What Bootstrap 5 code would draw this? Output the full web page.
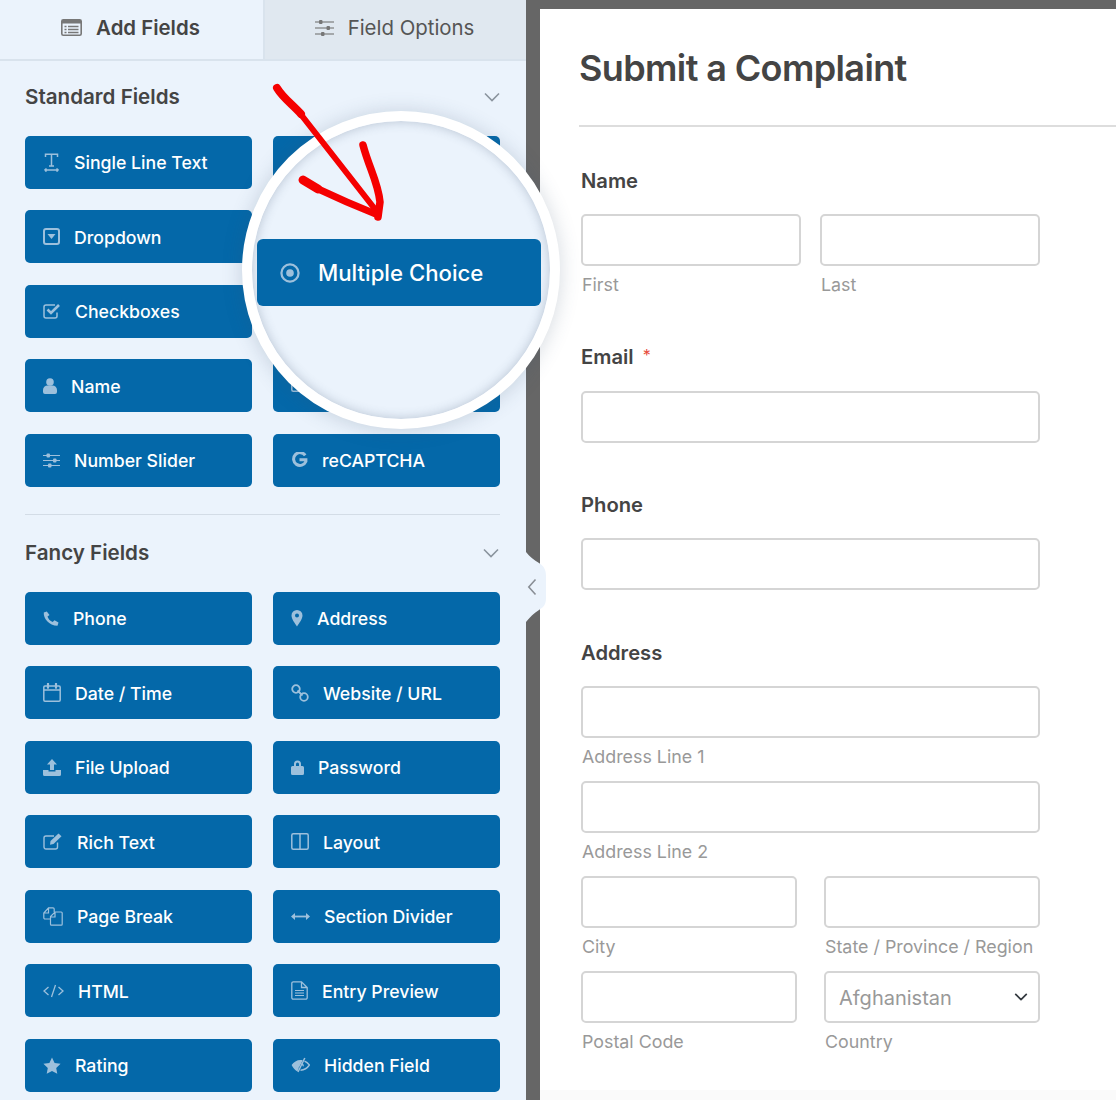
<!DOCTYPE html>
<html lang="en"><head><meta charset="utf-8"><title>Submit a Complaint</title>
<link href="https://cdn.jsdelivr.net/npm/bootstrap@5.3.0/dist/css/bootstrap.min.css" rel="stylesheet">
<style>
html,body{height:1100px;overflow:hidden;margin:0}
body{font-family:Inter,"Liberation Sans",sans-serif;background:#666;color:#444}
.stage{height:1100px;overflow:hidden}
.sidebar{width:526px;flex:none;height:1100px;background:#ebf3fc}
.tabbar{height:61px;border-bottom:2px solid #d9e3ed}
.tabitem{width:263px;font-size:20.4px;gap:14px;line-height:24px;padding:0 2px 4px 0}
.tabitem svg{color:#777}
.tab-on{font-weight:600;color:#444}
.tab-off{background:#e0e8f0;color:#555;border-left:2px solid #d9e3ed}
.fieldset-box{padding:24px 25px 0}
.fieldset-next{padding-top:26px;border-top:1px solid #d3dce6;margin:27px 26px 0 25px}
.group-head{font-size:20.6px;font-weight:600;line-height:24px;color:#444;margin:0 0 26.9px}
.group-head svg{color:#8a949e;margin-right:1px}
.btn-grid{display:grid;grid-template-columns:227px 227px;column-gap:21px;row-gap:21.5px}
.btn.fld-btn{height:53px;padding:2px 0 0 18px;gap:14px;background:#0468a9;border:0;border-radius:5px;color:#fff;font-size:17.7px;font-weight:500;line-height:22px;text-align:left}
.fld-btn svg{color:#9dc0dc;flex:none;margin-top:-2px}
.work{flex:1;padding:9px 0 0 14px;min-width:0}
.canvas{background:#fff;height:1091px;padding:0 0 0 39px;border-bottom:10px solid #fafafa}
.form-title{font-size:36px;font-weight:600;line-height:44px;color:#444;margin:0;padding-top:37px;letter-spacing:-.62px}
.form-rule{height:2px;background:#ddd;margin:35px 0 42px}
.form-body{width:459px;margin-left:2px}
.fld-label{display:block;font-size:20.2px;font-weight:600;line-height:24px;color:#444;margin:0 0 21px}
.fld-label-email{margin-bottom:22px}
.fld-req{color:#e74c3c;font-weight:400;font-size:16px;margin-left:4px;vertical-align:3px}
.fld-sec{margin-bottom:50px}
.fld-sec-name{margin-bottom:47px}
.fld-sec-phone{margin-bottom:51px}
.form-control.fld-in,.form-select.fld-in{height:52px;border:2px solid #d5d5d5;border-radius:5px;box-shadow:none}
.form-select.fld-in{font-size:20px;color:#999;padding:2px 0 0 13px;background-size:18px 14px;background-position:right 8px center}
.fld-sub{font-size:17.85px;line-height:22px;color:#999;margin:8px 0 0 1px}
.pair-a{display:grid;grid-template-columns:220px 220px;column-gap:19px}
.pair-b{display:grid;grid-template-columns:216px 216px;column-gap:27px}
.addr-rows{display:grid;row-gap:13px}
.side-tab{position:absolute;left:526px;top:552px}
.side-tab svg{display:block}
.lens{position:absolute;left:242px;top:111px;width:318px;height:318px;border-radius:50%;background:#ebf3fc;border:10px solid #fff;box-shadow:0 1px 20px rgba(60,80,110,.22),inset 0 0 11px rgba(60,80,110,.3)}
.lens-btn{width:284px;height:67px;background:#0468a9;color:#fff;border-radius:6px;font-size:22.2px;font-weight:500;padding-left:23px;gap:18px;flex:none;margin:5px 0 0 5px}
.lens-btn span{padding-top:1px}
.lens-btn svg{color:#9dc0dc;flex:none}
.arrow{position:absolute;left:260px;top:70px}
</style></head><body>
<div class="stage d-flex position-relative">
<aside class="sidebar">
  <div class="tabbar d-flex">
    <div class="tabitem tab-on d-flex align-items-center justify-content-center">
      <svg width="21" height="17" viewBox="0 0 21 17"><rect x=".8" y=".8" width="19.400" height="15.400" rx="1.500" fill="none" stroke="currentColor" stroke-width="1.600"/><rect x="1" y="1" width="19" height="3.500" fill="currentColor"/><path d="M3.500 7.500h2M3.500 10.500h2M3.500 13.500h2M7 7.500h10.500M7 10.500h10.500M7 13.500h10.500" stroke="currentColor" stroke-width="1.300"/></svg>
      <span>Add Fields</span></div>
    <div class="tabitem tab-off d-flex align-items-center justify-content-center">
      <svg width="19" height="18" viewBox="0 0 19 18"><path d="M0 3h19M0 9h19M0 15h19" stroke="currentColor" stroke-width="1.600" opacity=".75"/><rect x="4" y="1" width="3.500" height="4" rx="1" fill="currentColor"/><rect x="11.500" y="7" width="3.500" height="4" rx="1" fill="currentColor"/><rect x="6" y="13" width="3.500" height="4" rx="1" fill="currentColor"/></svg>
      <span>Field Options</span></div>
  </div>

  <section class="fieldset-box">
    <div class="group-head d-flex justify-content-between align-items-center"><span>Standard Fields</span><svg width="16" height="10" viewBox="0 0 16 10"><path d="M1 1.500l7 7 7-7" fill="none" stroke="currentColor" stroke-width="1.600"/></svg></div>
    <div class="btn-grid">
      <button class="btn fld-btn d-flex align-items-center"><svg width="17" height="20" viewBox="0 0 17 20"><path d="M2.500 5V2.200h12V5M8.500 2.200V14M6 14h5M1.500 18h14M1.500 18l2-1.500M1.500 18l2 1.500M15.500 18l-2-1.500M15.500 18l-2 1.500" fill="none" stroke="currentColor" stroke-width="1.500"/></svg><span>Single Line Text</span></button>
      <button class="btn fld-btn d-flex align-items-center" aria-label="Paragraph Text"></button>
      <button class="btn fld-btn d-flex align-items-center"><svg width="17" height="17" viewBox="0 0 17 17"><rect x="1" y="1" width="15" height="15" rx="2" fill="none" stroke="currentColor" stroke-width="2"/><path d="M4.500 6h8l-4 5z" fill="currentColor"/></svg><span>Dropdown</span></button>
      <button class="btn fld-btn d-flex align-items-center" aria-label="Multiple Choice"></button>
      <button class="btn fld-btn d-flex align-items-center"><svg width="18" height="16" viewBox="0 0 18 16"><path d="M14 9.500V13a2 2 0 0 1-2 2H3a2 2 0 0 1-2-2V4a2 2 0 0 1 2-2h9" fill="none" stroke="currentColor" stroke-width="1.500"/><path d="M4.500 6.500l3.500 3.500L16 2" fill="none" stroke="currentColor" stroke-width="2.600"/></svg><span>Checkboxes</span></button>
      <button class="btn fld-btn d-flex align-items-center" aria-label="Numbers"></button>
      <button class="btn fld-btn d-flex align-items-center"><svg width="14" height="16" viewBox="0 0 14 16"><circle cx="7" cy="4" r="3.800" fill="currentColor"/><path d="M0 14v-2a4.500 4.500 0 0 1 4.500-4.500h5A4.500 4.500 0 0 1 14 12v2a2 2 0 0 1-2 2H2a2 2 0 0 1-2-2z" fill="currentColor"/></svg><span>Name</span></button>
      <button class="btn fld-btn d-flex align-items-center" aria-label="Email"><svg width="16" height="12" viewBox="0 0 16 12"><rect x=".8" y=".8" width="14.400" height="10.400" rx="1.500" fill="none" stroke="currentColor" stroke-width="1.500"/></svg></button>
      <button class="btn fld-btn d-flex align-items-center"><svg width="17" height="15" viewBox="0 0 17 15"><path d="M0 2.500h17M0 7.500h17M0 12.500h17" stroke="currentColor" stroke-width="1.200"/><rect x="3.500" y=".5" width="3.500" height="4" rx="1" fill="currentColor"/><rect x="10" y="5.500" width="3.500" height="4" rx="1" fill="currentColor"/><rect x="5" y="10.500" width="3.500" height="4" rx="1" fill="currentColor"/></svg><span>Number Slider</span></button>
      <button class="btn fld-btn d-flex align-items-center"><svg width="17" height="16" viewBox="0 0 17 16"><path d="M14.200 3.300A6.400 6.400 0 1 0 14.900 9.500V7.800H8.500" fill="none" stroke="currentColor" stroke-width="3"/></svg><span>reCAPTCHA</span></button>
    </div>
  </section>

  <section class="fieldset-next">
    <div class="group-head d-flex justify-content-between align-items-center"><span>Fancy Fields</span><svg width="16" height="10" viewBox="0 0 16 10"><path d="M1 1.500l7 7 7-7" fill="none" stroke="currentColor" stroke-width="1.600"/></svg></div>
    <div class="btn-grid">
      <button class="btn fld-btn d-flex align-items-center"><svg width="16" height="15" viewBox="0 0 16 15"><path d="M3.800 .5L.8 1.500C.2 7.500 6 14.500 14.500 14.800l1-3.300-4-2.200-1.800 1.700C7 10 5 7.500 4.500 5.500l2-1.500z" fill="currentColor"/></svg><span>Phone</span></button>
      <button class="btn fld-btn d-flex align-items-center"><svg width="12" height="17" viewBox="0 0 12 17"><path fill-rule="evenodd" d="M6 0a5.500 5.500 0 0 1 5.500 5.500C11.500 9 8 13.500 6 16.500 4 13.500.5 9 .5 5.500A5.500 5.500 0 0 1 6 0zm0 3.500a2 2 0 1 0 0 4 2 2 0 0 0 0-4z" fill="currentColor"/></svg><span>Address</span></button>
      <button class="btn fld-btn d-flex align-items-center"><svg width="18" height="19" viewBox="0 0 18 19"><rect x=".8" y="3" width="16.400" height="15.200" rx="1.200" fill="none" stroke="currentColor" stroke-width="1.500"/><path d="M1 7h16" stroke="currentColor" stroke-width="1.500"/><path d="M5 .8v4M13 .8v4" stroke="currentColor" stroke-width="2.200" stroke-linecap="round"/></svg><span>Date / Time</span></button>
      <button class="btn fld-btn d-flex align-items-center"><svg width="18" height="18" viewBox="0 0 18 18"><circle cx="5" cy="5" r="3.800" fill="none" stroke="currentColor" stroke-width="1.800"/><circle cx="13" cy="13" r="3.800" fill="none" stroke="currentColor" stroke-width="1.800"/><path d="M6.500 6.500l5 5" stroke="currentColor" stroke-width="1.800"/></svg><span>Website / URL</span></button>
      <button class="btn fld-btn d-flex align-items-center"><svg width="18" height="17" viewBox="0 0 18 17"><path d="M9 0l5 5.500h-3V11H7V5.500H4z" fill="currentColor"/><path d="M0 11h5.500v1.500h7V11H18v4.500a1.500 1.500 0 0 1-1.500 1.500h-15A1.500 1.500 0 0 1 0 15.500z" fill="currentColor"/></svg><span>File Upload</span></button>
      <button class="btn fld-btn d-flex align-items-center"><svg width="13" height="15" viewBox="0 0 13 15"><path fill-rule="evenodd" d="M3 6V4a3.500 3.500 0 0 1 7 0v2h1.500A1.500 1.500 0 0 1 13 7.500V13.500a1.500 1.500 0 0 1-1.500 1.500h-10A1.500 1.500 0 0 1 0 13.500V7.500A1.500 1.500 0 0 1 1.500 6zm2 0h3V4a1.500 1.500 0 0 0-3 0z" fill="currentColor"/></svg><span>Password</span></button>
      <button class="btn fld-btn d-flex align-items-center"><svg width="20" height="17" viewBox="0 0 20 17"><path d="M14.500 9.500V14a2 2 0 0 1-2 2H3a2 2 0 0 1-2-2V5a2 2 0 0 1 2-2h8" fill="none" stroke="currentColor" stroke-width="1.400"/><path d="M7.500 8l8-7.500 3 2.800-8 7.700-3.500.8z" fill="currentColor"/></svg><span>Rich Text</span></button>
      <button class="btn fld-btn d-flex align-items-center"><svg width="18" height="17" viewBox="0 0 18 17"><rect x=".8" y=".8" width="16.400" height="15.400" rx="1.500" fill="none" stroke="currentColor" stroke-width="1.500"/><path d="M9 1v15" stroke="currentColor" stroke-width="1.500"/></svg><span>Layout</span></button>
      <button class="btn fld-btn d-flex align-items-center"><svg width="20" height="19" viewBox="0 0 20 19"><path d="M7 12H2a1.200 1.200 0 0 1-1.200-1.200V6L5.500.8H10a1.200 1.200 0 0 1 1.200 1.200v3M1 6h4.500V1" fill="none" stroke="currentColor" stroke-width="1.200"/><path d="M12 5h6.200A1 1 0 0 1 19.200 6v11.200a1 1 0 0 1-1 1H8.500a1 1 0 0 1-1-1V9.500zM7.500 10H12V5" fill="none" stroke="currentColor" stroke-width="1.200"/></svg><span>Page Break</span></button>
      <button class="btn fld-btn d-flex align-items-center"><svg width="19" height="9" viewBox="0 0 19 9"><path d="M3 4.500h13" stroke="currentColor" stroke-width="1.800"/><path d="M0 4.500L4 1v7zM19 4.500L15 1v7z" fill="currentColor"/></svg><span>Section Divider</span></button>
      <button class="btn fld-btn d-flex align-items-center"><svg width="21" height="14" viewBox="0 0 21 14"><path d="M5.500 3L1 7l4.500 4M15.500 3L20 7l-4.500 4M12.500 1L8.500 13" fill="none" stroke="currentColor" stroke-width="1.300"/></svg><span>HTML</span></button>
      <button class="btn fld-btn d-flex align-items-center"><svg width="17" height="19" viewBox="0 0 17 19"><path d="M10.500.8H2.300A1.500 1.500 0 0 0 .8 2.300v14.400a1.500 1.500 0 0 0 1.500 1.500h12.400a1.500 1.500 0 0 0 1.500-1.500V6.500zM10.500 1v5.500H16" fill="none" stroke="currentColor" stroke-width="1.300"/><path d="M4 9.500h9M4 12h9M4 14.500h9" stroke="currentColor" stroke-width="1.200"/></svg><span>Entry Preview</span></button>
      <button class="btn fld-btn d-flex align-items-center"><svg width="18" height="17" viewBox="0 0 18 17"><path d="M9 .5l2.600 5.500 6 .8-4.400 4.100 1.100 5.900L9 13.900l-5.300 2.900 1.100-5.900L.4 6.800l6-.8z" fill="currentColor"/></svg><span>Rating</span></button>
      <button class="btn fld-btn d-flex align-items-center"><svg width="19" height="16" viewBox="0 0 19 16"><path d="M.6 8C2.800 5 5.700 3 9.500 3c.8 0 1.500.1 2.200.3L8.600 9.500a2.500 2.500 0 0 0-1 2.500L6.400 14.500C3.800 13.300 2 10.700.6 8z" fill="currentColor"/><path d="M13.500 4.200C15.500 5 17.200 6.500 18.400 8c-2 3-5 5-8.900 5.200M10.500 6.600a2 2 0 0 1 1.500 2.600" fill="none" stroke="currentColor" stroke-width="1.400"/><path d="M13.800 1L7 15" stroke="currentColor" stroke-width="1.500"/></svg><span>Hidden Field</span></button>
    </div>
  </section>
</aside>

<main class="work">
  <div class="canvas">
    <h1 class="form-title">Submit a Complaint</h1>
    <div class="form-rule"></div>
    <div class="form-body">
      <div class="fld-sec fld-sec-name">
        <label class="fld-label">Name</label>
        <div class="pair-a">
          <div><input class="form-control fld-in" type="text"><div class="fld-sub">First</div></div>
          <div><input class="form-control fld-in" type="text"><div class="fld-sub">Last</div></div>
        </div>
      </div>
      <div class="fld-sec">
        <label class="fld-label fld-label-email">Email <span class="fld-req">*</span></label>
        <input class="form-control fld-in" type="text">
      </div>
      <div class="fld-sec fld-sec-phone">
        <label class="fld-label">Phone</label>
        <input class="form-control fld-in" type="text">
      </div>
      <div class="fld-sec">
        <label class="fld-label">Address</label>
        <div class="addr-rows">
          <div><input class="form-control fld-in" type="text"><div class="fld-sub">Address Line 1</div></div>
          <div><input class="form-control fld-in" type="text"><div class="fld-sub">Address Line 2</div></div>
          <div class="pair-b">
            <div><input class="form-control fld-in" type="text"><div class="fld-sub">City</div></div>
            <div><input class="form-control fld-in" type="text"><div class="fld-sub">State / Province / Region</div></div>
          </div>
          <div class="pair-b">
            <div><input class="form-control fld-in" type="text"><div class="fld-sub">Postal Code</div></div>
            <div><select class="form-select fld-in"><option>Afghanistan</option></select><div class="fld-sub">Country</div></div>
          </div>
        </div>
      </div>
    </div>
  </div>
</main>

<div class="side-tab">
  <svg width="20" height="70" viewBox="0 0 20 70"><path d="M0 0C4 5 8 8 13 11C18 14 20 18 20 24V46C20 52 18 55 13 58C8 61 4 65 0 70Z" fill="#ebf3fc"/><path d="M9.500 27.500L2.800 35L9.500 42.500" fill="none" stroke="#8a8f96" stroke-width="1.600"/></svg>
</div>

<div class="lens d-flex align-items-center">
  <div class="lens-btn d-flex align-items-center">
    <svg width="20" height="20" viewBox="0 0 21 21"><circle cx="10.500" cy="10.500" r="9" fill="none" stroke="currentColor" stroke-width="2.400"/><circle cx="10.500" cy="10.500" r="4" fill="currentColor"/></svg>
    <span>Multiple Choice</span>
  </div>
</div>

<svg class="arrow" width="130" height="160" viewBox="260 70 130 160" fill="none" stroke="#f50000" stroke-linecap="round" stroke-linejoin="round" aria-hidden="true">
  <path d="M277 88C283 98 292 104 301 114" stroke-width="8"/>
  <path d="M299 112L378 213" stroke-width="6"/>
  <path d="M363 145C369 168 378 182 380 202L378 217" stroke-width="7.500"/>
  <path d="M303 180L318 189" stroke-width="9"/>
  <path d="M316 188C335 197 358 207 378 215" stroke-width="7"/>
</svg>
</div>
</body></html>
